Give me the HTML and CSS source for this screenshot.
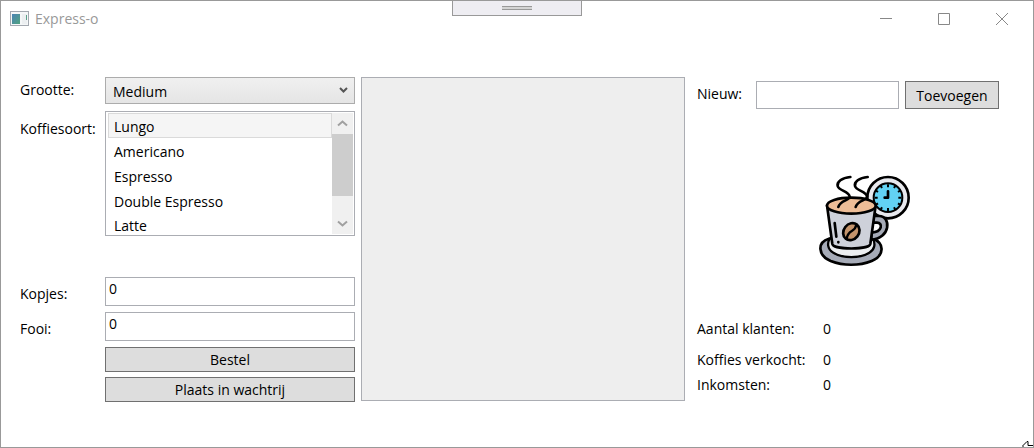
FILE: index.html
```html
<!DOCTYPE html>
<html lang="nl">
<head>
<meta charset="utf-8">
<title>Express-o</title>
<link rel="stylesheet" href="styles.css">
</head>
<body>
<div class="window">
  <header class="titlebar">
    <svg class="app-icon" width="19" height="16" viewBox="0 0 19 16" aria-hidden="true">
      <defs><linearGradient id="screen" x2="1" y2="1"><stop stop-color="#4b83b5"/><stop offset="1" stop-color="#50a37f"/></linearGradient></defs>
      <rect x=".5" y=".5" width="18" height="14" fill="#f5f7f8" stroke="#a3a8b0"/>
      <rect x="2" y="3" width="8" height="10" fill="url(#screen)"/>
      <rect x="12" y="3" width="5" height="10" fill="#eceff1"/>
      <rect x="16" y="4" width="1" height="5" fill="#5ba08a"/>
    </svg>
    <h1 class="title">Express-o</h1>
    <button class="caption" type="button" aria-label="Minimaliseren"><svg width="14" height="14" viewBox="0 0 14 14"><path d="M1 6.500h12"/></svg></button>
    <button class="caption" type="button" aria-label="Maximaliseren"><svg width="14" height="14" viewBox="0 0 14 14"><path d="M1.500 1.500h11v11h-11z"/></svg></button>
    <button class="caption" type="button" aria-label="Sluiten"><svg width="14" height="14" viewBox="0 0 14 14"><path d="M1 1l12 12M13 1L1 13"/></svg></button>
  </header>
  <button class="grip" type="button" aria-label="Werkbalk"><span class="grip-lines"></span></button>

  <main class="content">
    <form class="order">
      <label class="label" for="size">Grootte:</label>
      <div class="combo">
        <select class="combo-select" id="size"><option>Medium</option></select>
        <svg class="combo-arrow" width="9" height="6" viewBox="0 0 9 6" aria-hidden="true"><path d="M1 1l3.500 3.500L8 1" fill="none" stroke="#555" stroke-width="2"/></svg>
      </div>
      <span class="label label-list" id="kind">Koffiesoort:</span>
      <div class="listbox">
        <ul class="options" role="listbox" aria-labelledby="kind" tabindex="0">
          <li class="option current" role="option">Lungo</li>
          <li class="option" role="option">Americano</li>
          <li class="option" role="option">Espresso</li>
          <li class="option" role="option">Double Espresso</li>
          <li class="option" role="option">Latte</li>
        </ul>
        <div class="scrollbar">
          <button class="scroll-button" type="button" aria-label="Omhoog"><svg width="11" height="7" viewBox="0 0 11 7"><path d="M1 5.500l4.500-4 4.500 4"/></svg></button>
          <div class="track"><div class="thumb"></div></div>
          <button class="scroll-button" type="button" aria-label="Omlaag"><svg width="11" height="7" viewBox="0 0 11 7"><path d="M1 1.500l4.500 4 4.500-4"/></svg></button>
        </div>
      </div>
      <label class="label label-field" for="cups">Kopjes:</label>
      <input class="field" id="cups" type="text" value="0">
      <label class="label label-field" for="tip">Fooi:</label>
      <input class="field" id="tip" type="text" value="0">
      <div class="actions">
        <button class="button" type="button">Bestel</button>
        <button class="button" type="button">Plaats in wachtrij</button>
      </div>
    </form>

    <section class="queue" aria-label="Wachtrij"></section>

    <section class="side">
      <form class="add">
        <label class="label" for="new">Nieuw:</label>
        <input class="field new-field" id="new" type="text">
        <button class="button add-button" type="button">Toevoegen</button>
      </form>
      <svg class="logo" viewBox="27 30 276 276" role="img" aria-label="Koffiekop met klok">
        <g stroke="#000" stroke-width="8" stroke-linecap="round" stroke-linejoin="round">
          <circle cx="234" cy="98" r="62" fill="#e8e9ee"/>
          <circle cx="234" cy="98" r="43" fill="#62d2f4" stroke-width="6"/>
          <path d="M234 58v9M234 129v9M194 98h9M265 98h9M212 62l4 7M256 62l-4 7M212 134l4-7M256 134l-4-7M198 77l6 4M270 77l-6 4M198 119l6-4M270 119l-6-4" stroke-width="6" stroke-linecap="butt"/>
          <path d="M234 79v19h-10" fill="none"/>
          <path d="M57 221C20 232 24 272 62 288c38 15 86 15 123 0 38-16 40-54 3-67z" fill="#a6abb7"/>
          <path d="M59 221c-7 12-8 32 11 42 30 18 78 18 108 0 16-9 19-26 11-42z" fill="#eceef0" stroke-width="7"/>
          <path d="M190 153h17c37 0 36 68-24 71l2-21c33-2 34-30 16-30h-13z" fill="#a6abb7"/>
          <path d="M51 121l16 116c4 18 110 18 114 0l16-116z" fill="#ced1da"/>
          <ellipse cx="124" cy="122" rx="73" ry="24" fill="#edbd97"/>
          <path d="M121 36c-26 2-41 15-38 27 4 15 34 15 36 32 1 12-29 10-34 31M173 36c-26 2-41 15-38 27 4 15 34 15 36 32 1 12-29 10-34 31" fill="none"/>
          <path d="M74 174l5 41M85 231v1" fill="none"/>
          <ellipse cx="124" cy="200" rx="23" ry="27" transform="rotate(38 124 200)" fill="#c4946c"/>
          <path d="M139 179c-4 26-25 12-29 43" fill="none" stroke-width="7"/>
        </g>
      </svg>
      <dl class="stats">
        <div class="stat stat-first"><dt>Aantal klanten:</dt><dd>0</dd></div>
        <div class="stat"><dt>Koffies verkocht:</dt><dd>0</dd></div>
        <div class="stat"><dt>Inkomsten:</dt><dd>0</dd></div>
      </dl>
    </section>
  </main>
  <svg class="cursor" width="12" height="7" viewBox="0 0 12 7" aria-hidden="true"><path d="M12 4.500H6V.5H5L.5 5 3 7.500h9" fill="#fff" stroke="#000"/></svg>
</div>
</body>
</html>
```
FILE: styles.css
```css
* { box-sizing: border-box; }
body {
  margin: 0;
  background: #fff;
  color: #000;
  font: 14px/20px "Open Sans", "Noto Sans", sans-serif;
}
button, input, select { font: inherit; color: inherit; margin: 0; border-radius: 0; }
.window {
  position: relative;
  min-height: 100vh;
  border: 1px solid #999;
  overflow: hidden;
}
.titlebar { display: flex; align-items: center; height: 36px; padding-left: 9px; padding-right: 2px; }
.app-icon { margin-right: 6px; }
.title { margin: 0; flex: 1; font-size: 14px; font-weight: 400; color: #999; }
.caption {
  display: flex; align-items: center; justify-content: center;
  width: 58px; height: 36px; padding: 0; border: 0; background: none;
}
.caption path { fill: none; stroke: #888; }
.grip {
  position: absolute; top: -1px; left: 50%; transform: translateX(-50%);
  width: 130px; height: 16px; padding: 0;
  display: flex; align-items: center; justify-content: center;
  background: #eeedf2; border: 1px solid #999;
}
.grip-lines { width: 30px; height: 4px; background: #d4d4d4; border: solid #999; border-width: 1px 0; }

.content {
  display: grid;
  grid-template-columns: 335fr 324fr 308fr;
  gap: 6px;
  align-items: start;
  padding: 40px 34px 44px 19px;
}
.order { display: grid; grid-template-columns: 85px 1fr; align-items: start; row-gap: 6px; }
.label { padding-top: 3px; white-space: nowrap; }
.label-list { padding-top: 8px; }
.label-field { padding-top: 7px; }
.combo { position: relative; height: 28px; }
.combo-select {
  width: 100%; height: 27px; padding: 2px 7px 0; line-height: 20px;
  appearance: none; border: 1px solid #acacac;
  background: linear-gradient(#f0f0f0, #e5e5e5);
}
.combo-arrow { position: absolute; right: 7px; top: 10px; }
.listbox {
  display: flex; height: 125px; margin-bottom: 35px; padding: 1px;
  border: 1px solid #abadb3; background: #fff;
}
.options { flex: 1; margin: 0; padding: 0 0 0 1px; list-style: none; overflow: hidden; outline: 0; }
.option { height: 25px; padding: 3px 5px 0; border: 1px solid transparent; }
.option:last-child { height: 21px; padding-top: 2px; }
.current { background: #f5f5f5; border-color: #dadada; }
.scrollbar { display: flex; flex-direction: column; width: 21px; background: #f0f0f0; }
.scroll-button {
  display: flex; align-items: center; justify-content: center;
  height: 21px; padding: 0; border: 0; background: #f0f0f0;
}
.scroll-button path { fill: none; stroke: #a0a0a0; stroke-width: 2; }
.track { flex: 1; }
.thumb { height: 78%; background: #cdcdcd; }
.field { width: 100%; height: 29px; padding: 0 3px 6px; border: 1px solid #abadb3; background: #fff; }
.actions { grid-column: 2; display: grid; gap: 5px; }
.button {
  display: flex; align-items: center; justify-content: center;
  height: 25px; padding: 0 8px; border: 1px solid #707070; background: #ddd; white-space: nowrap;
}
.queue { align-self: stretch; min-height: 324px; margin-bottom: 1px; background: #eee; border: 1px solid #abadb3; }

.side { display: flex; flex-direction: column; padding: 4px 0 0 6px; }
.add { display: grid; grid-template-columns: 53px 1fr 94px; column-gap: 6px; }
.new-field, .add-button { height: 28px; }
.add-button { padding-top: 2px; }
.logo { width: 92px; height: 92px; margin: 66px 88px 0 0; align-self: flex-end; overflow: visible; }
.stats { display: grid; gap: 5px; margin: 52px 0 0; }
.stat { display: grid; grid-template-columns: 126px 1fr; }
.stat-first { margin-bottom: 6px; }
.stat dd { margin: 0; }
.cursor { position: absolute; right: -1px; bottom: -1px; }
```
